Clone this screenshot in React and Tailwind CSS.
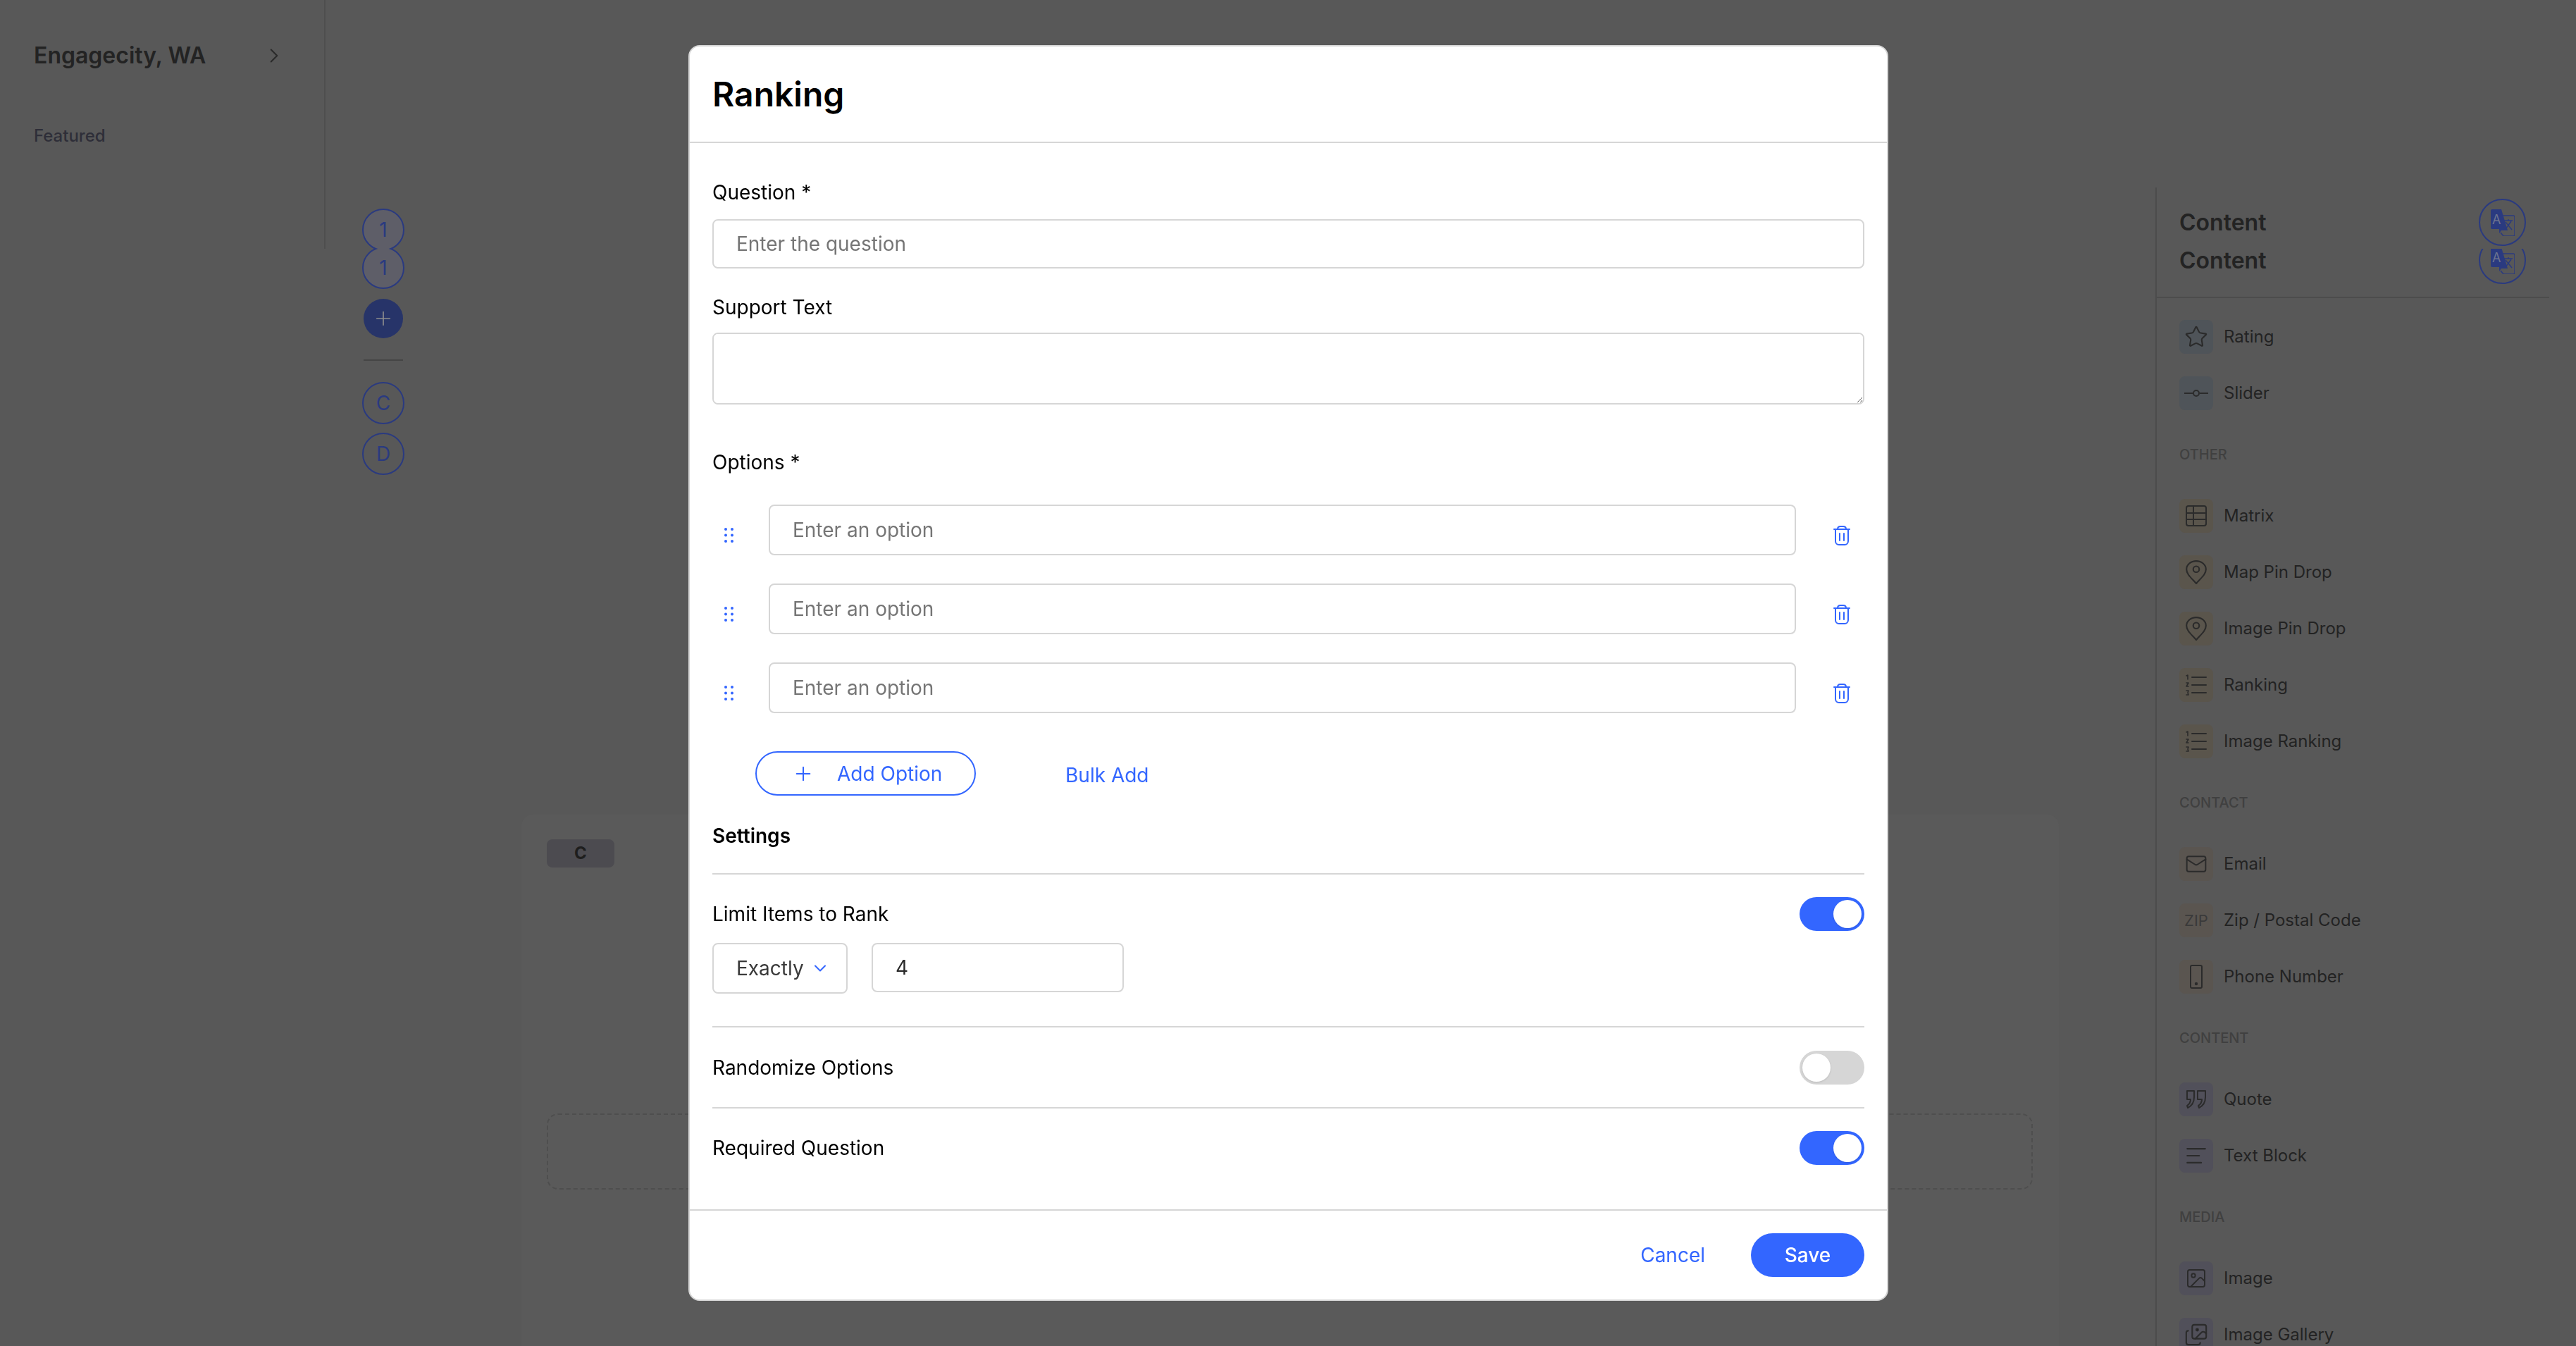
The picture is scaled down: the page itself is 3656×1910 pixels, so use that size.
import React from "react";
import { Star, Mail, Image as ImageIcon, Images, AlignLeft, ChevronRight, ChevronDown, Plus, Trash } from "lucide-react";

const Svg = ({ children, size = 32 }) => (
  <svg width={size} height={size} viewBox="0 0 32 32" fill="none" stroke="#2b2b2b" strokeWidth="2" strokeLinecap="round" strokeLinejoin="round">{children}</svg>
);
const SliderIcon = () => (
  <svg width="36" height="12" viewBox="0 0 36 12" fill="none" stroke="#2b2b2b" strokeWidth="2"><path d="M1 6h12M23 6h12" /><circle cx="18" cy="6" r="4" /></svg>
);
const MatrixIcon = () => (
  <Svg><rect x="2" y="2" width="28" height="28" rx="3" /><path d="M12 2v28M2 12h28M2 21h28" /></Svg>
);
const PinIcon = () => (
  <Svg size={34}><path d="M16 31C10 24 3 19 3 12a13 11 0 0 1 26 0c0 7-7 12-13 19Z" /><circle cx="16" cy="12" r="4" /></Svg>
);
const RankIcon = () => (
  <Svg><path d="M10 5h20M10 16h20M10 27h20" /><path d="M2 3l2-1v6M2 13h3l-3 5h3M2 24h3l-1 3 1 3H2" strokeWidth="1.6" /></Svg>
);
const PhoneIcon = () => (
  <svg width="18" height="34" viewBox="0 0 18 34" fill="none" stroke="#2b2b2b" strokeWidth="2"><rect x="1" y="1" width="16" height="32" rx="2" /><circle cx="9" cy="27" r="1.2" fill="#2b2b2b" /></svg>
);
const QuoteIcon = () => (
  <Svg><path d="M3 4h10v9c0 7-3 12-9 15l-1-3c3-2 5-5 5-9H3Z" /><path d="M18 4h11v9c0 7-3 12-9 15l-1-3c3-2 5-5 5-9h-6Z" /></Svg>
);
const TranslateIcon = () => (
  <svg width="34" height="38" viewBox="0 0 34 38">
    <path d="M2 0h13l9 30h-9l-3 4v-6H2a2 2 0 0 1-2-2V2a2 2 0 0 1 2-2Z" fill="#2a3a80" />
    <text x="2" y="21" fontSize="18" fontFamily="Inter, sans-serif" fill="#6d7390">A</text>
    <path d="M17 9h15a2 2 0 0 1 2 2v25a2 2 0 0 1-2 2H18l-4-5" fill="none" stroke="#2a3a80" strokeWidth="1.5" />
    <path d="M19 16h12M25 14v2M21 28l8-11M21 18l9 11" fill="none" stroke="#2a3a80" strokeWidth="1.4" />
  </svg>
);

const Grip = () => (
  <svg width="13" height="21" viewBox="0 0 13 21" fill="#3366ff" className="mt-[14px] shrink-0">
    <circle cx="2" cy="2" r="2" /><circle cx="11" cy="2" r="2" />
    <circle cx="2" cy="10.5" r="2" /><circle cx="11" cy="10.5" r="2" />
    <circle cx="2" cy="19" r="2" /><circle cx="11" cy="19" r="2" />
  </svg>
);
const TrashIcon = () => (
  <svg width="24" height="28" viewBox="0 0 24 28" fill="none" stroke="#3366ff" strokeWidth="2" strokeLinecap="round" className="mt-[16px] shrink-0">
    <path d="M1 5h22M3 5v17a5 5 0 0 0 5 5h8a5 5 0 0 0 5-5V5M6 5c0-3 2-4 4-4h4c2 0 4 1 4 4M9 11v10M15 11v10" />
  </svg>
);

const Toggle = ({ on }) => (
  <div className={`flex h-[48px] w-[92px] items-center rounded-full px-[4px] ${on ? "justify-end bg-[#3366ff]" : "justify-start bg-[#d6d6d6]"}`}>
    <div className="h-[40px] w-[40px] rounded-full bg-white shadow-sm" />
  </div>
);

const Item = ({ bg, icon, label }) => (
  <div className="flex h-[48px] items-center">
    <div className={`flex h-[48px] w-[48px] items-center justify-center rounded-[8px] ${bg}`}>{icon}</div>
    <span className="ml-[15px] text-[24px] text-[#232323]">{label}</span>
  </div>
);

const Section = ({ title, children }) => (
  <div className="mt-[51px]">
    <div className="mb-[51px] h-[24px] text-[20px] leading-[24px] font-medium text-[#404040]">{title}</div>
    <div className="flex flex-col gap-[32px]">{children}</div>
  </div>
);

const blue = "bg-[#4f5459]", tan = "bg-[#5a554c]", tan2 = "bg-[#5a5550]", slate = "bg-[#51505a]";
const inputCls = "rounded-[8px] border-2 border-[#d6d6d6] bg-white text-[28px] outline-none placeholder:text-[#757575]";

function Circle({ label, tall = 60, shift = 0, fill = "" }) {
  return (
    <div className="overflow-hidden" style={{ height: tall }}>
      <div className={`flex h-[60px] w-[60px] items-center justify-center rounded-full border-2 border-[#2a3a80] text-[28px] text-[#2a3a80] ${fill}`} style={{ marginTop: shift }}>{label}</div>
    </div>
  );
}

export default function App() {
  return (
    <div className="relative flex h-[1910px] w-[3656px] overflow-hidden bg-[#585858] font-['Inter',sans-serif]">
      {/* Page behind the dialog */}
      <aside className="h-[353px] w-[462px] shrink-0 border-r-2 border-[#4e4e4e] pt-[58px] pl-[48px]">
        <div className="flex h-[42px] items-center justify-between pr-[54px]">
          <span className="text-[32px] leading-[42px] font-semibold text-[#232323]">Engagecity, WA</span>
          <ChevronRight size={34} strokeWidth={1.5} color="#2b2b2b" />
        </div>
        <div className="mt-[78px] text-[24px] leading-[30px] font-medium text-[#2e2e38]">Featured</div>
      </aside>

      <div className="ml-[52px] flex w-[60px] shrink-0 flex-col items-center pt-[296px]">
        <Circle label="1" tall={57} fill="bg-[#5e5e68]" />
        <Circle label="1" tall={57} shift={-3} fill="bg-[#5e5e68]" />
        <div className="mt-[14px] flex h-[56px] w-[56px] items-center justify-center rounded-full bg-[#273469]">
          <Plus size={32} strokeWidth={1.25} color="#8d8d8d" />
        </div>
        <div className="mt-[30px] h-[2px] w-[56px] bg-[#454545]" />
        <div className="mt-[30px]"><Circle label="C" /></div>
        <div className="mt-[12px]"><Circle label="D" /></div>
      </div>

      <main className="mt-[1156px] ml-[166px] h-[800px] w-[2182px] shrink-0 rounded-[16px] bg-[#5a5a5a] px-[36px] pt-[35px]">
        <div className="flex h-[40px] w-[96px] items-center justify-center rounded-[8px] bg-[#4c4b50] text-[24px] font-bold text-[#1e1e1e]">C</div>
        <div className="mt-[349px] h-[108px] w-[2109px] rounded-[16px] border-2 border-dashed border-[#4e4e4e]" />
      </main>

      <section className="mt-[266px] ml-[137px] w-[559px] shrink-0 border-l-2 border-[#4c4c4c]">
        <div className="border-b-2 border-[#4c4c4c] pr-[33px] pl-[32px]">
          <div className="flex h-[87px] items-start justify-between overflow-hidden pt-[16px]">
            <span className="text-[32px] leading-[67px] font-semibold text-[#232323]">Content</span>
            <div className="flex h-[67px] w-[67px] items-center justify-center rounded-full border-2 border-[#2a3a80]"><TranslateIcon /></div>
          </div>
          <div className="flex h-[68px] items-start justify-between overflow-hidden">
            <span className="-mt-[17px] text-[32px] leading-[67px] font-semibold text-[#232323]">Content</span>
            <div className="-mt-[17px] flex h-[67px] w-[67px] items-center justify-center rounded-full border-2 border-[#2a3a80]"><TranslateIcon /></div>
          </div>
        </div>
        <div className="pt-[31px] pl-[32px]">
          <div className="flex flex-col gap-[32px]">
            <Item bg={blue} icon={<Star size={34} strokeWidth={1.5} color="#2b2b2b" />} label="Rating" />
            <Item bg={blue} icon={<SliderIcon />} label="Slider" />
          </div>
          <Section title="OTHER">
            <Item bg={tan} icon={<MatrixIcon />} label="Matrix" />
            <Item bg={tan} icon={<PinIcon />} label="Map Pin Drop" />
            <Item bg={tan} icon={<PinIcon />} label="Image Pin Drop" />
            <Item bg={tan} icon={<RankIcon />} label="Ranking" />
            <Item bg={tan} icon={<RankIcon />} label="Image Ranking" />
          </Section>
          <Section title="CONTACT">
            <Item bg={tan2} icon={<Mail size={32} strokeWidth={1.5} color="#2b2b2b" />} label="Email" />
            <Item bg={tan2} icon={<span className="text-[22px] text-[#3a3a3a]">ZIP</span>} label="Zip / Postal Code" />
            <Item bg={tan2} icon={<PhoneIcon />} label="Phone Number" />
          </Section>
          <Section title="CONTENT">
            <Item bg={slate} icon={<QuoteIcon />} label="Quote" />
            <Item bg={slate} icon={<AlignLeft size={34} strokeWidth={1.5} color="#2b2b2b" />} label="Text Block" />
          </Section>
          <Section title="MEDIA">
            <Item bg={slate} icon={<ImageIcon size={32} strokeWidth={1.5} color="#2b2b2b" />} label="Image" />
            <Item bg={slate} icon={<Images size={34} strokeWidth={1.5} color="#2b2b2b" />} label="Image Gallery" />
          </Section>
        </div>
      </section>

      {/* Dialog */}
      <div className="absolute top-[64px] left-[977px] flex h-[1782px] w-[1703px] flex-col rounded-[16px] border-2 border-[#d6d6d6] bg-white text-black">
        <header className="flex h-[137px] shrink-0 items-center border-b-2 border-[#d6d6d6] pl-[32px]">
          <h1 className="text-[48px] leading-[60px] font-semibold">Ranking</h1>
        </header>
        <div className="flex-1 px-[32px] pt-[52px]">
          <label className="block text-[28px] leading-[36px]">Question *</label>
          <input className={`mt-[20px] block h-[70px] w-full px-[32px] ${inputCls}`} placeholder="Enter the question" />
          <label className="mt-[37px] block text-[28px] leading-[36px]">Support Text</label>
          <textarea className={`mt-[18px] block h-[102px] w-full p-[32px] ${inputCls}`} />
          <label className="mt-[64px] block text-[28px] leading-[36px]">Options *</label>
          <div className="mt-[42px] flex flex-col gap-[40px]">
            {[0, 1, 2].map((i) => (
              <div key={i} className="flex items-center pl-[17px]">
                <Grip />
                <input className={`ml-[50px] h-[72px] w-[1458px] px-[32px] ${inputCls}`} placeholder="Enter an option" />
                <div className="ml-[53px]"><TrashIcon /></div>
              </div>
            ))}
          </div>
          <div className="mt-[54px] flex items-center pl-[61px]">
            <button className="flex h-[63px] w-[313px] items-center rounded-full border-2 border-[#3366ff] pl-[50px] text-[28px] text-[#3366ff]">
              <Plus size={32} strokeWidth={1.5} />
              <span className="ml-[32px]">Add Option</span>
            </button>
            <button className="mt-[4px] ml-[127px] text-[28px] text-[#3366ff]">Bulk Add</button>
          </div>
          <h2 className="mt-[39px] text-[28px] leading-[36px] font-semibold">Settings</h2>
          <div className="mt-[35px] border-t-2 border-[#d6d6d6] pt-[32px] pb-[46px]">
            <div className="flex h-[48px] items-center justify-between">
              <span className="text-[28px]">Limit Items to Rank</span>
              <Toggle on />
            </div>
            <div className="mt-[17px] flex items-start gap-[34px]">
              <div className="flex h-[72px] w-[192px] items-center rounded-[8px] border-2 border-[#d6d6d6] pl-[32px] text-[28px] text-[#3a3a3a]">
                Exactly
                <ChevronDown size={28} strokeWidth={1.75} color="#3366ff" className="ml-[9px]" />
              </div>
              <input className={`h-[70px] w-[358px] px-[32px] text-[#2a2a2a] ${inputCls}`} defaultValue="4" />
            </div>
          </div>
          <div className="flex h-[115px] items-center justify-between border-t-2 border-[#d6d6d6] pt-[1px]">
            <span className="text-[28px]">Randomize Options</span>
            <Toggle />
          </div>
          <div className="flex items-center justify-between border-t-2 border-[#d6d6d6] pt-[32px]">
            <span className="text-[28px]">Required Question</span>
            <Toggle on />
          </div>
        </div>
        <footer className="flex h-[128px] shrink-0 items-start justify-end border-t-2 border-[#d6d6d6] pt-[32px] pr-[32px]">
          <button className="mt-[11px] text-[28px] leading-[40px] text-[#3366ff]">Cancel</button>
          <button className="ml-[65px] h-[62px] w-[161px] rounded-full bg-[#3366ff] text-[28px] font-medium text-white">Save</button>
        </footer>
      </div>
    </div>
  );
}
